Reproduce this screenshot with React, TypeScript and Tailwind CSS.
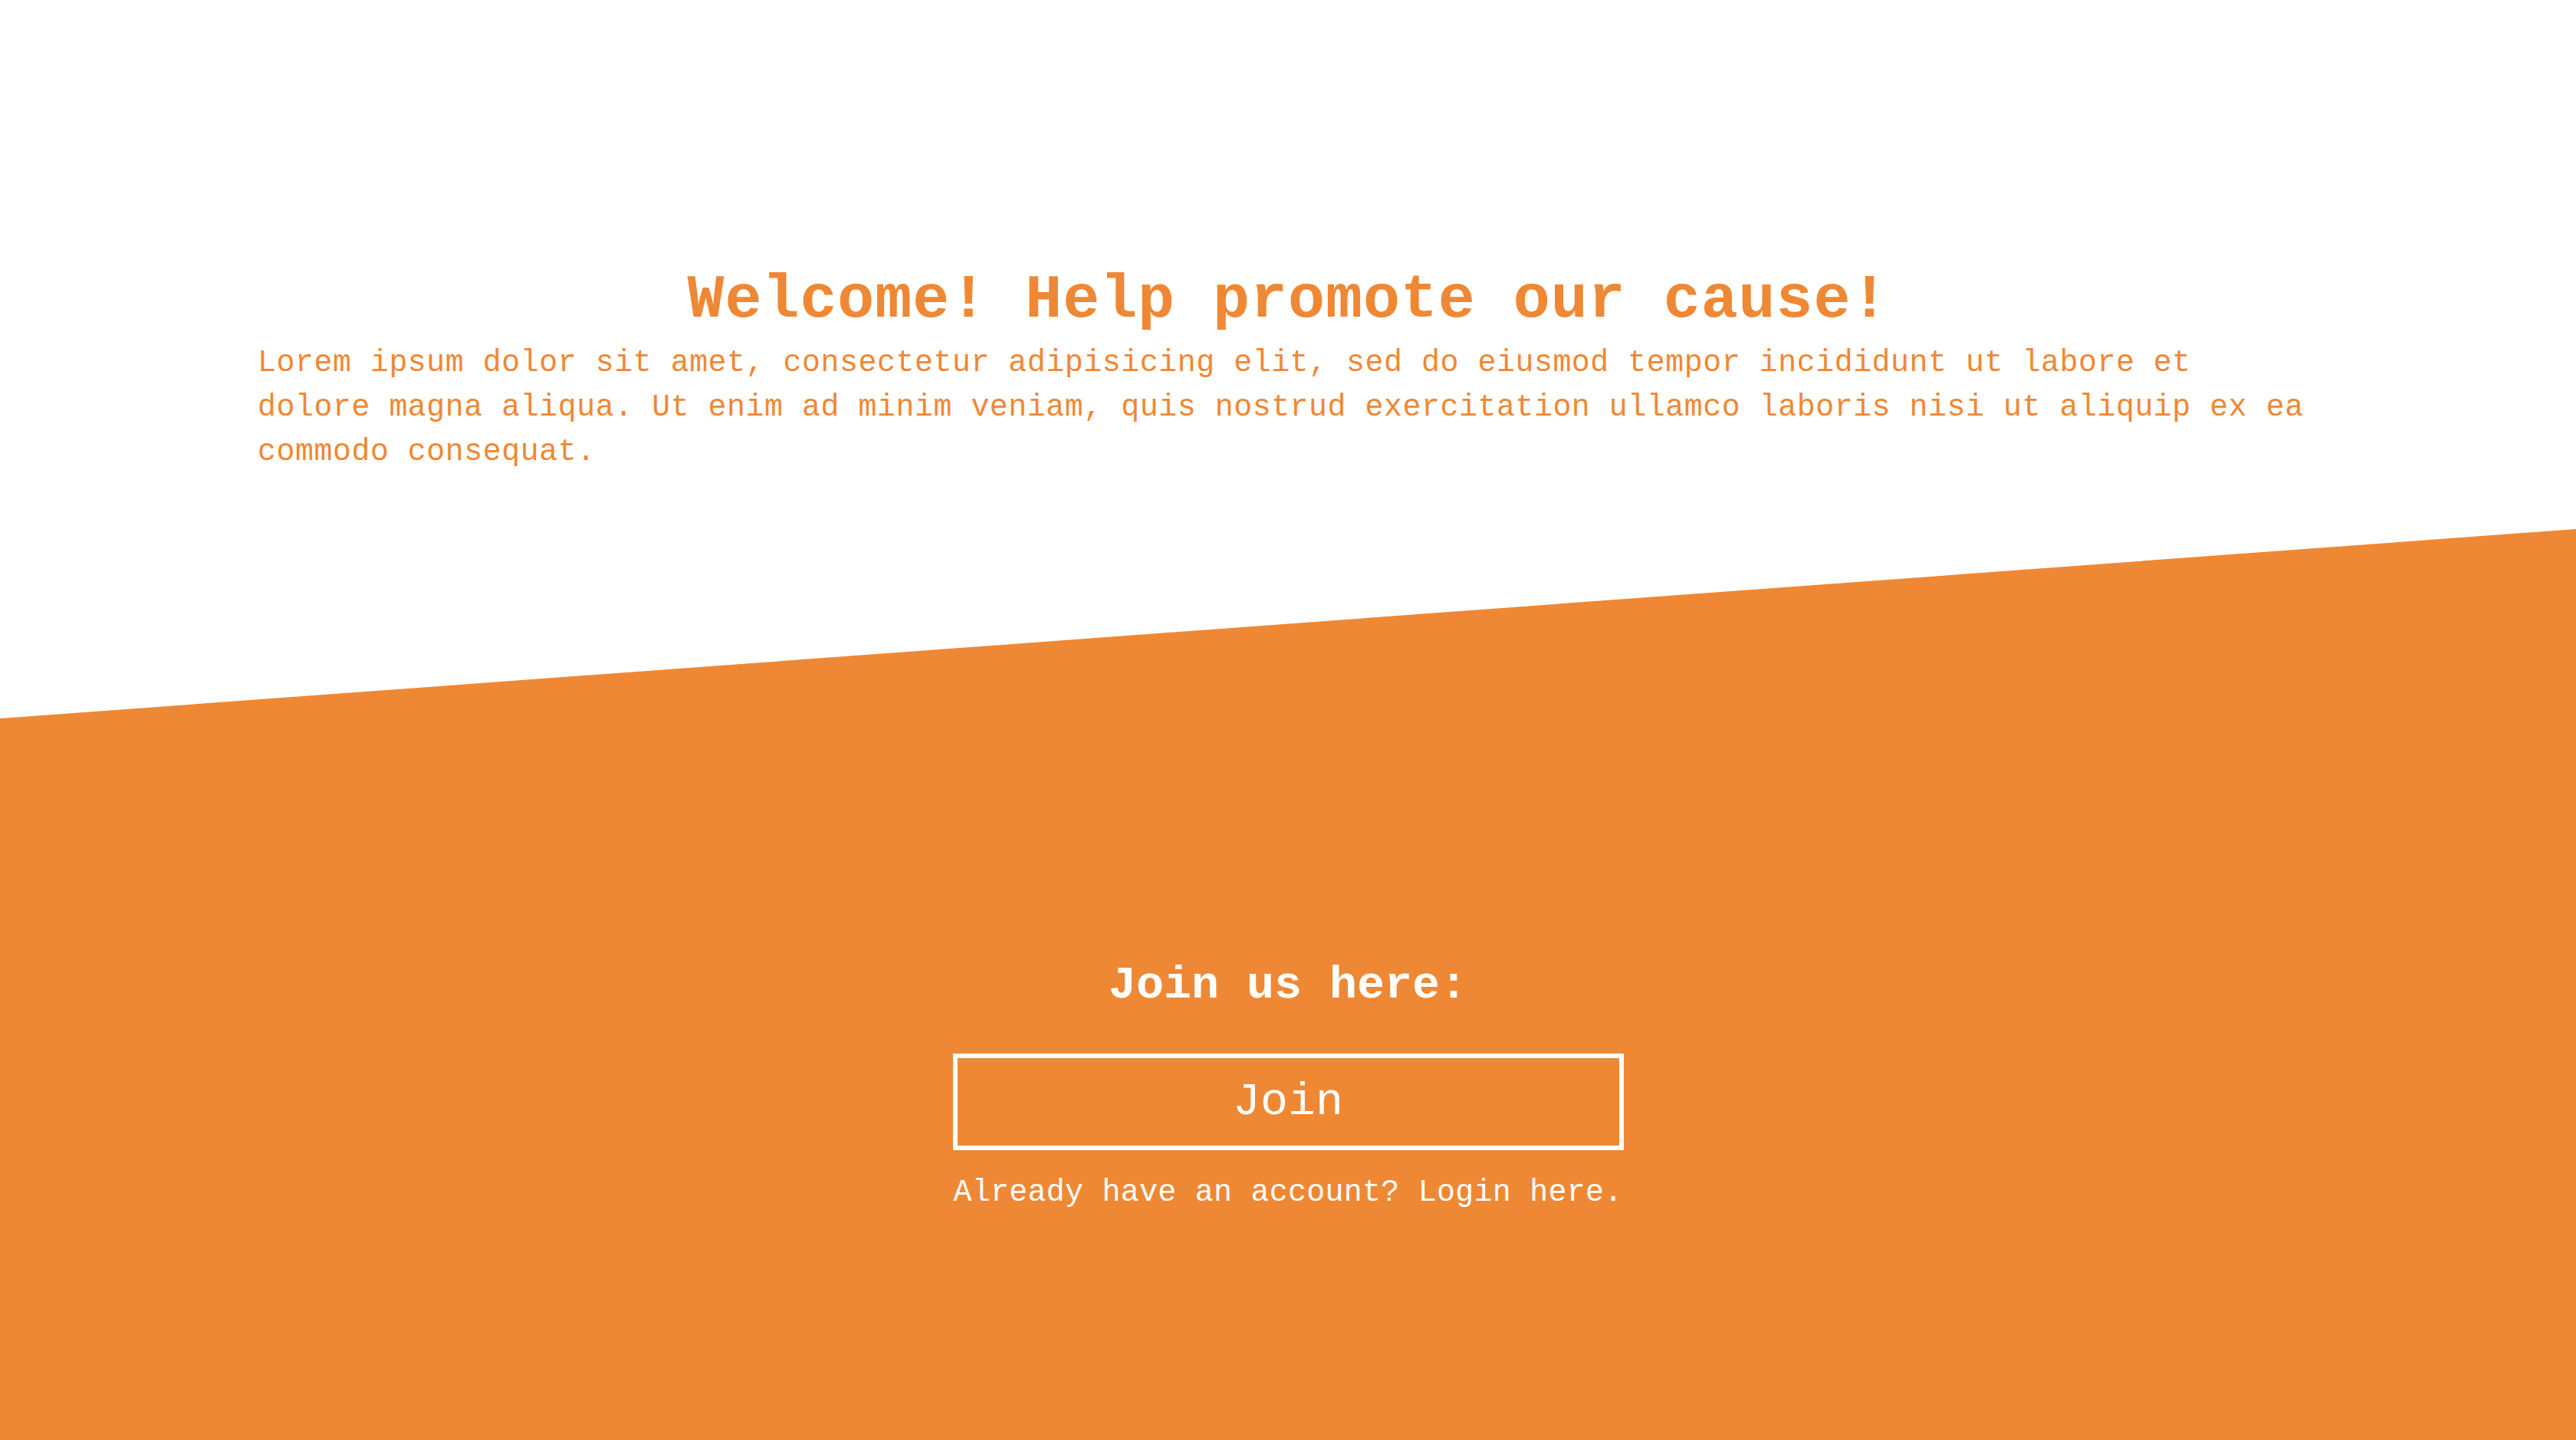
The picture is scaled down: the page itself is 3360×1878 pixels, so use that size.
const WelcomePage = () => {
  return (
    <div className="w-full min-h-screen bg-white font-['Liberation_Mono',monospace] text-[#ef8834]">
      <section className="h-[690px] px-[336px] pt-[352px]">
        <h1 className="text-center text-[80px] leading-[80px] tracking-[0.96px] font-bold">
          Welcome! Help promote our cause!
        </h1>
        <p className="mt-[13px] text-[40px] leading-[58px] tracking-[0.48px]">
          Lorem ipsum dolor sit amet, consectetur adipisicing elit, sed do eiusmod tempor incididunt ut labore et
          dolore magna aliqua. Ut enim ad minim veniam, quis nostrud exercitation ullamco laboris nisi ut aliquip ex
          ea commodo consequat.
        </p>
      </section>

      <section className="h-[1188px] bg-[#ef8834] text-white [clip-path:polygon(0_247px,100%_0,100%_100%,0_100%)] flex flex-col items-center pt-[565px]">
        <h2 className="text-[60px] leading-[60px] font-bold">Join us here:</h2>
        <button
          type="button"
          className="mt-[59px] w-[875px] h-[126px] border-[6px] border-white flex items-center justify-center text-[60px] leading-[60px]"
        >
          Join
        </button>
        <p className="mt-[36px] text-[40px] leading-[40px] tracking-[0.24px]">
          Already have an account? <a href="#">Login here.</a>
        </p>
      </section>
    </div>
  );
};

export default WelcomePage;
